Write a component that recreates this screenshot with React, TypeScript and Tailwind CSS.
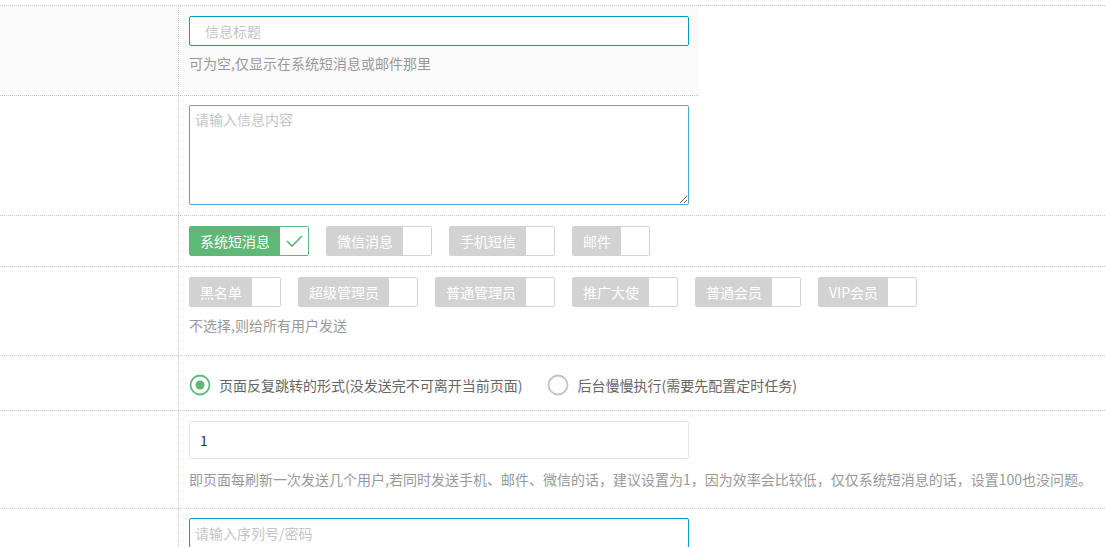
import React from "react";

const font = { fontFamily: '"Noto Sans CJK SC", "Liberation Sans", sans-serif' };

interface ISwitch {
  label: string;
  checked?: boolean;
}

const Switch: React.FC<ISwitch> = ({ label, checked }) => (
  <div
    className={
      "flex h-[30px] rounded-[2px] border " +
      (checked ? "border-[#5FB878]" : "border-[#d2d2d2]")
    }
  >
    <span
      className={
        "flex items-center px-[10px] text-[14px] leading-[28px] text-white " +
        (checked ? "bg-[#5FB878]" : "bg-[#d2d2d2]")
      }
    >
      {label}
    </span>
    <span className="flex w-[28px] items-center justify-center bg-white">
      {checked && (
        <svg width="18" height="14" viewBox="0 0 18 14">
          <path d="M2 7 L7 12 L17 2" fill="none" stroke="#5FB878" strokeWidth="1.6" />
        </svg>
      )}
    </span>
  </div>
);

const Radio: React.FC<{ label: string; checked?: boolean }> = ({ label, checked }) => (
  <div className="flex items-center">
    <svg width="22" height="22" viewBox="0 0 22 22" className="mr-[8px]">
      <circle cx="11" cy="11" r="9.5" fill="#fff" stroke={checked ? "#5FB878" : "#c2c2c2"} strokeWidth="1.8" />
      {checked && <circle cx="11" cy="11" r="4.5" fill="#5FB878" />}
    </svg>
    <span className="text-[14px] leading-[20px] text-[#666]">{label}</span>
  </div>
);

const LeftCell = () => <div className="w-[179px] shrink-0 border-r border-dotted border-[#c8c8c8]" />;

export default function App() {
  const channels = [
    { label: "系统短消息", checked: true },
    { label: "微信消息" },
    { label: "手机短信" },
    { label: "邮件" },
  ];
  const groups = ["黑名单", "超级管理员", "普通管理员", "推广大使", "普通会员", "VIP会员"];

  return (
    <div className="h-[547px] w-[1105px] overflow-hidden bg-white pt-[5px]" style={font}>
      <div className="border-t border-dotted border-[#c8c8c8]" />

      {/* title row, hovered */}
      <div className="flex w-[699px] border-b border-dotted border-[#c8c8c8] bg-[#fafafa]">
        <LeftCell />
        <div className="flex-1 pl-[10px] pt-[10px] pb-[23px]">
          <input
            placeholder="信息标题"
            className="block h-[30px] w-[500px] rounded-[2px] border border-[#00a0c4] bg-white pl-[15px] text-[14px] outline-none placeholder:text-[#c4c4c4]"
          />
          <div className="mt-[8px] text-[14px] leading-[18px] text-[#999]">可为空,仅显示在系统短消息或邮件那里</div>
        </div>
      </div>

      {/* content */}
      <div className="flex border-b border-dotted border-[#c8c8c8]">
        <LeftCell />
        <div className="flex-1 pl-[10px] pt-[9px] pb-[10px]">
          <textarea
            placeholder="请输入信息内容"
            className="block h-[100px] w-[500px] rounded-[2px] border border-[#4aaccc] bg-white px-[5px] py-[3px] text-[14px] leading-[20px] outline-none placeholder:text-[#c4c4c4]"
          />
        </div>
      </div>

      {/* channels */}
      <div className="flex border-b border-dotted border-[#c8c8c8]">
        <LeftCell />
        <div className="flex flex-1 gap-[17px] pl-[10px] pt-[10px] pb-[10px]">
          {channels.map((c) => (
            <Switch key={c.label} label={c.label} checked={c.checked} />
          ))}
        </div>
      </div>

      {/* user groups */}
      <div className="flex border-b border-dotted border-[#c8c8c8]">
        <LeftCell />
        <div className="flex-1 pl-[10px] pt-[10px] pb-[21px]">
          <div className="flex gap-[17px]">
            {groups.map((g) => (
              <Switch key={g} label={g} />
            ))}
          </div>
          <div className="mt-[9px] text-[14px] leading-[18px] text-[#999]">不选择,则给所有用户发送</div>
        </div>
      </div>

      {/* send mode */}
      <div className="flex h-[55px] border-b border-dotted border-[#c8c8c8]">
        <LeftCell />
        <div className="flex flex-1 items-center gap-[25px] pl-[10px] pt-[4px]">
          <Radio label="页面反复跳转的形式(没发送完不可离开当前页面)" checked />
          <Radio label="后台慢慢执行(需要先配置定时任务)" />
        </div>
      </div>

      {/* per page */}
      <div className="flex border-b border-dotted border-[#c8c8c8]">
        <LeftCell />
        <div className="flex-1 pl-[10px] pt-[10px] pb-[20px]">
          <input
            defaultValue="1"
            className="block h-[38px] w-[500px] rounded-[2px] border border-[#e6e6e6] bg-white pl-[10px] text-[14px] text-[#333] outline-none"
          />
          <div className="mt-[11px] whitespace-nowrap text-[14px] leading-[18px] text-[#999]">
            即页面每刷新一次发送几个用户,若同时发送手机、邮件、微信的话，建议设置为1，因为效率会比较低，仅仅系统短消息的话，设置100也没问题。
          </div>
        </div>
      </div>

      {/* serial */}
      <div className="flex h-[60px]">
        <LeftCell />
        <div className="flex-1 pl-[10px] pt-[9px]">
          <input
            placeholder="请输入序列号/密码"
            className="block h-[30px] w-[500px] rounded-[2px] border border-[#00a0c4] bg-white pl-[5px] text-[14px] outline-none placeholder:text-[#c4c4c4]"
          />
        </div>
      </div>
    </div>
  );
}
